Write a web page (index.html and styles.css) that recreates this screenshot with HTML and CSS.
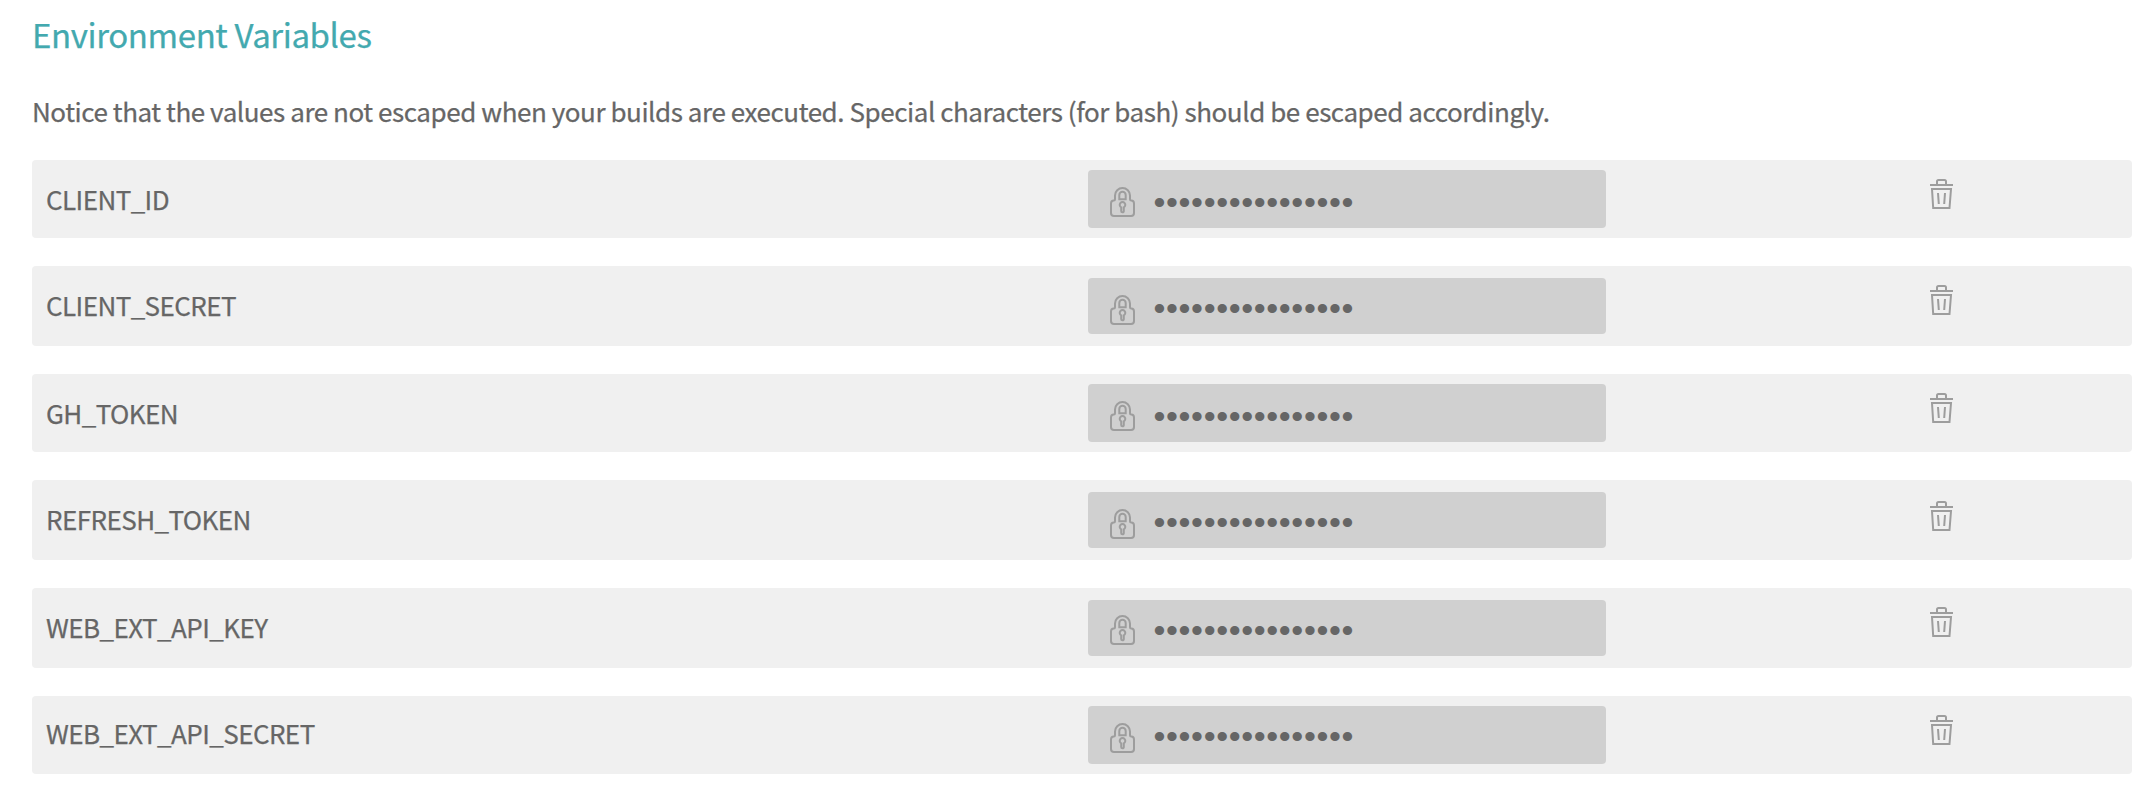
FILE: index.html
```
<!DOCTYPE html>
<html lang="en">
<head>
<meta charset="utf-8">
<title>Environment Variables</title>
<link rel="stylesheet" href="styles.css">
</head>
<body>
<svg width="0" height="0" class="defs" aria-hidden="true">
  <symbol id="lock" viewBox="0 0 25 30">
    <path d="M5 12.200V8.500a7.500 7.500 0 0 1 15 0v3.700q0 1.200 1.200 1.200 2.800 0 2.800 3V26q0 3-3 3H4Q1 29 1 26v-9.600q0-3 2.800-3Q5 13.400 5 12.200Z"/>
    <path d="M9.300 12.200V8a3.200 3.200 0 0 1 6.400 0v4.200Z"/>
    <path d="M11.200 20.300a2.800 2.800 0 1 1 2.600 0V24a1.300 1.300 0 0 1-2.600 0Z"/>
  </symbol>
  <symbol id="trash" viewBox="0 0 23 30">
    <path d="M0 6h23M7 5.500V2.500Q7 1 8.500 1h6Q16 1 16 2.500v3M2 10h19L19.500 29H3.200ZM8 14l.8 11M15 14l-.8 11"/>
  </symbol>
</svg>
<main class="env">
  <h1 class="title">Environment Variables</h1>
  <p class="notice">Notice that the values are not escaped when your builds are executed. Special characters (for bash) should be escaped accordingly.</p>
  <ul class="list">
    <li class="row"><span class="name">CLIENT_ID</span><span class="field"><svg class="lock"><use href="#lock"/></svg><span class="dots">••••••••••••••••</span></span><svg class="trash"><use href="#trash"/></svg></li>
    <li class="row"><span class="name">CLIENT_SECRET</span><span class="field"><svg class="lock"><use href="#lock"/></svg><span class="dots">••••••••••••••••</span></span><svg class="trash"><use href="#trash"/></svg></li>
    <li class="row"><span class="name">GH_TOKEN</span><span class="field"><svg class="lock"><use href="#lock"/></svg><span class="dots">••••••••••••••••</span></span><svg class="trash"><use href="#trash"/></svg></li>
    <li class="row"><span class="name">REFRESH_TOKEN</span><span class="field"><svg class="lock"><use href="#lock"/></svg><span class="dots">••••••••••••••••</span></span><svg class="trash"><use href="#trash"/></svg></li>
    <li class="row"><span class="name">WEB_EXT_API_KEY</span><span class="field"><svg class="lock"><use href="#lock"/></svg><span class="dots">••••••••••••••••</span></span><svg class="trash"><use href="#trash"/></svg></li>
    <li class="row"><span class="name">WEB_EXT_API_SECRET</span><span class="field"><svg class="lock"><use href="#lock"/></svg><span class="dots">••••••••••••••••</span></span><svg class="trash"><use href="#trash"/></svg></li>
  </ul>
</main>
</body>
</html>
```
FILE: styles.css
```
* { box-sizing: border-box; }
body {
  margin: 0;
  background: #fff;
  color: #666;
  font-family: "Noto Sans CJK SC", "Noto Sans", sans-serif;
  font-size: 26px;
  letter-spacing: -0.44px;
  -webkit-text-stroke: 0.25px currentColor;
}
.defs { display: block; }
.env { padding: 10px 20px 0 32px; }
.title {
  margin: 0;
  color: #43a9af;
  font-size: 33px;
  font-weight: 400;
  line-height: 48px;
  letter-spacing: -0.4px;
  white-space: nowrap;
}
.notice {
  margin: 33px 0 0;
  line-height: 40px;
  white-space: nowrap;
}
.list {
  list-style: none;
  margin: 29px 0 0;
  padding: 0;
}
.row {
  --h: 80px;
  --field-top: 12px;
  --field-h: 56px;
  --lock: 17px;
  --dots: 42px;
  --trash: 19px;
  --text: 19px;
  display: grid;
  grid-template-columns: 1056px 842px 1fr;
  align-items: start;
  height: var(--h);
  margin-bottom: 28px;
  border-radius: 4px;
  background: #f0f0f0;
}
.row:nth-child(1), .row:nth-child(3), .row:nth-child(6) { --h: 78px; --field-top: 10px; --field-h: 58px; }
.row:nth-child(4) { --trash: 21px; }
.row:nth-child(5) { --lock: 15px; }
.row:nth-child(6) { --dots: 40px; --text: 17px; }
.name {
  padding: var(--text) 0 0 14px;
  line-height: 40px;
  letter-spacing: -0.56px;
}
.field {
  display: flex;
  align-items: flex-start;
  width: 518px;
  height: var(--field-h);
  margin-top: var(--field-top);
  padding-left: 22px;
  border-radius: 4px;
  background: #d0d0d0;
}
.lock, .trash {
  flex: none;
  fill: none;
  stroke: #9d9d9d;
  stroke-width: 2;
}
.lock {
  width: 25px;
  height: 30px;
  margin-top: var(--lock);
}
.trash {
  width: 23px;
  height: 30px;
  margin-top: var(--trash);
}
.dots {
  margin: calc(var(--dots) - var(--field-top) - 20px) 0 0 18.5px;
  font-family: "Liberation Sans", sans-serif;
  font-size: 34px;
  line-height: 40px;
  letter-spacing: 0.63px;
  -webkit-text-stroke: 0;
}
```
